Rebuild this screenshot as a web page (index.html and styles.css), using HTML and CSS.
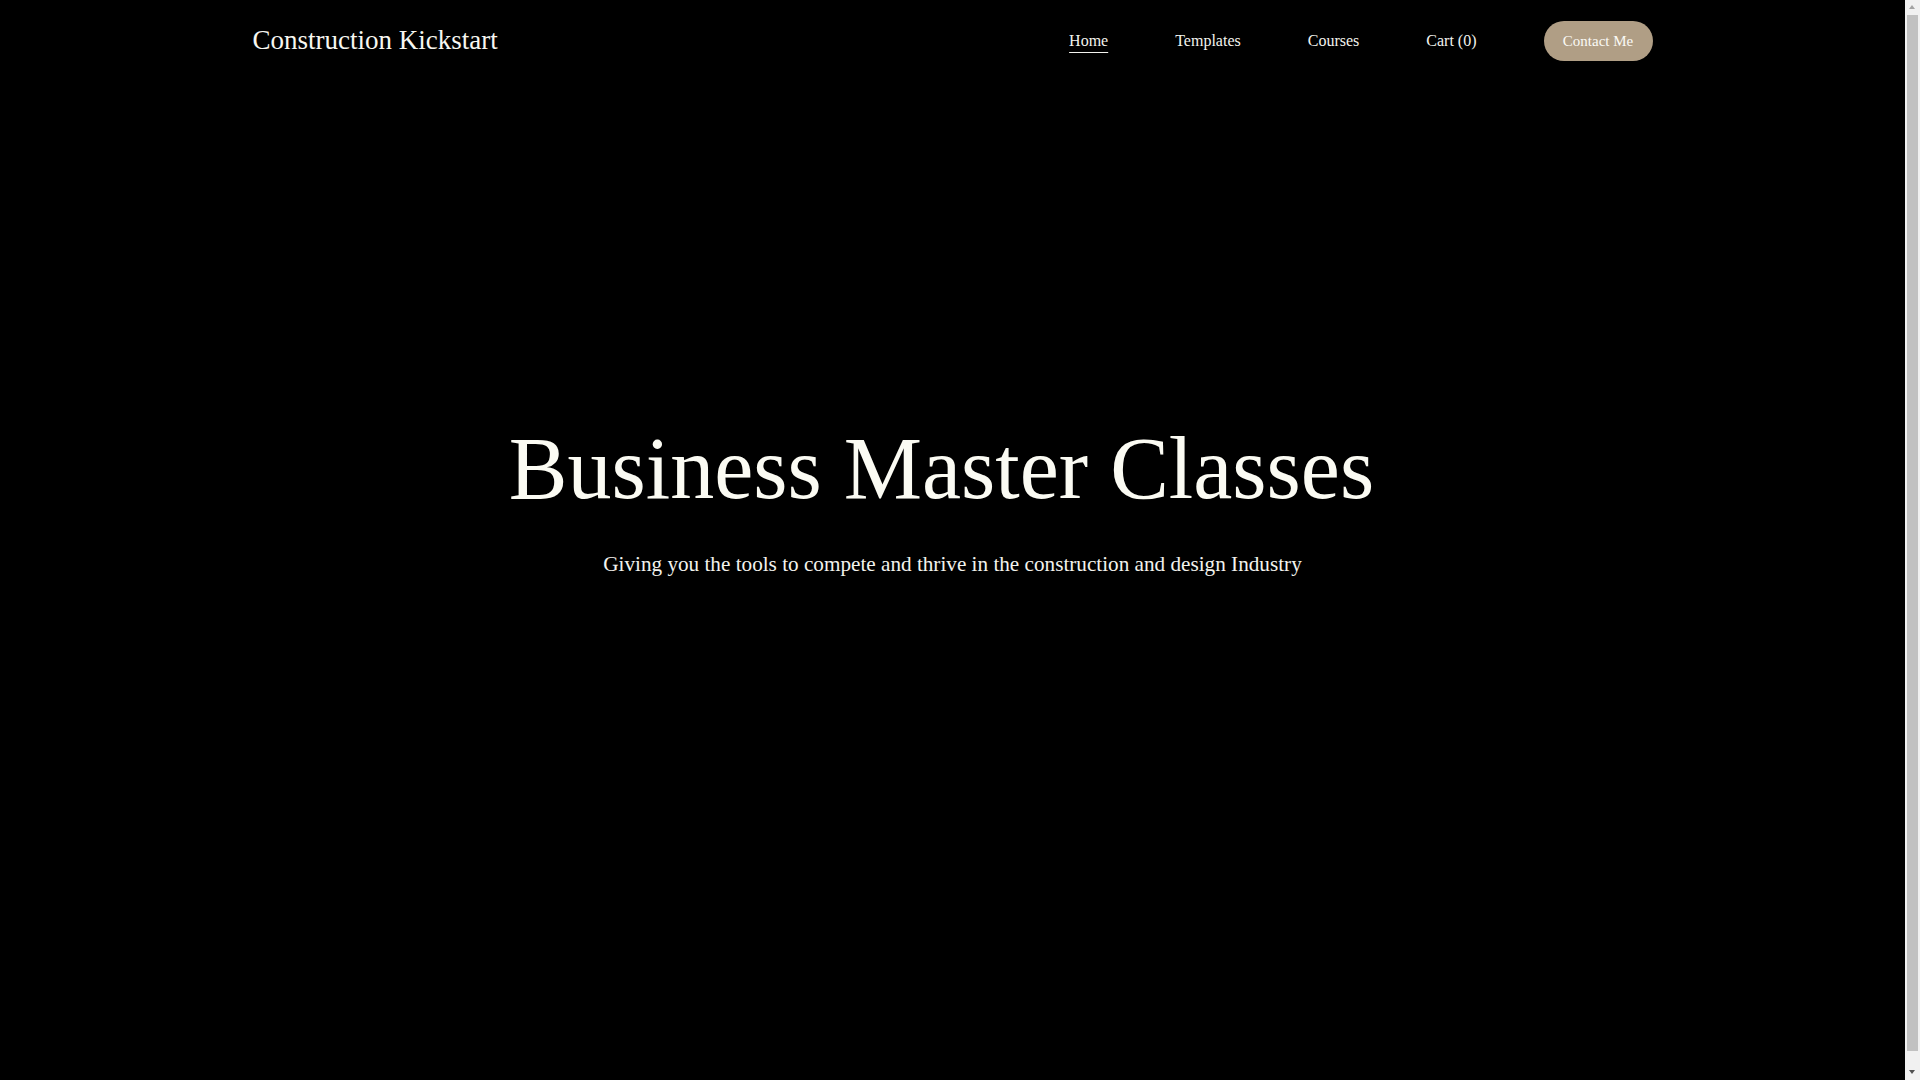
FILE: index.html
```html
<!DOCTYPE html>
<html lang="en">
<head>
<meta charset="utf-8">
<title>Construction Kickstart</title>
<link rel="stylesheet" href="styles.css">
</head>
<body>
<header class="site-header">
  <div class="header-inner">
    <a class="logo" href="#">Construction Kickstart</a>
    <nav class="main-nav">
      <a class="nav-link active" href="#">Home</a>
      <a class="nav-link" href="#">Templates</a>
      <a class="nav-link" href="#">Courses</a>
      <a class="nav-link" href="#">Cart (0)</a>
      <a class="btn-contact" href="#">Contact Me</a>
    </nav>
  </div>
</header>
<main class="hero">
  <h1 class="hero-title">Business Master Classes&nbsp;</h1>
  <p class="hero-sub">Giving you the tools to compete and thrive in the construction and design Industry</p>
</main>
<div class="scrollbar" aria-hidden="true">
  <span class="sb-arrow sb-up"></span>
  <span class="sb-thumb"></span>
  <span class="sb-arrow sb-down"></span>
</div>
</body>
</html>
```
FILE: styles.css
```css
html, body {
  margin: 0;
  padding: 0;
  background: #000;
}
body {
  font-family: "Liberation Serif", "Times New Roman", serif;
  color: #fafaf2;
  margin-right: 15px;
}
a {
  color: inherit;
  text-decoration: none;
}
.site-header {
  padding: 21px 0;
}
.header-inner {
  width: 1400px;
  margin: 0 auto;
  display: flex;
  align-items: center;
  justify-content: space-between;
  height: 40px;
}
.logo {
  font-size: 27px;
  line-height: 33px;
  margin-bottom: 2px;
  color: #f7f7f1;
}
.main-nav {
  display: flex;
  align-items: center;
  gap: 67px;
}
.nav-link {
  font-size: 16px;
  line-height: 24px;
  color: #f3f3ee;
}
.nav-link.active {
  text-decoration: underline;
  text-decoration-thickness: 1px;
  text-underline-offset: 6px;
}
.btn-contact {
  display: inline-flex;
  align-items: center;
  height: 40px;
  box-sizing: border-box;
  padding: 0 19.3px;
  border-radius: 20px;
  background: #b09e85;
  color: #fbfaf6;
  font-size: 15px;
  line-height: 15px;
}
.hero {
  height: 1012px;
  box-sizing: border-box;
  padding-top: 334px;
  text-align: center;
}
.hero-title {
  margin: 0;
  font-weight: normal;
  font-size: 88px;
  line-height: 105.6px;
  color: #fbfbf3;
}
.hero-sub {
  margin: 26px 0 0;
  font-size: 21.2px;
  line-height: 32px;
  color: #f3f3ee;
}

/* browser-style scrollbar overlay */
.scrollbar {
  position: fixed;
  top: 0;
  right: 0;
  width: 15px;
  height: 100vh;
  background: #f1f1f1;
}
.sb-thumb {
  position: absolute;
  left: 2px;
  top: 15px;
  width: 11px;
  height: 1036px;
  background: #c1c1c1;
}
.sb-arrow {
  position: absolute;
  left: 4px;
  width: 0;
  height: 0;
  border-left: 3.5px solid transparent;
  border-right: 3.5px solid transparent;
}
.sb-up {
  top: 5px;
  border-bottom: 4px solid #a3a3a3;
}
.sb-down {
  bottom: 6px;
  border-top: 4px solid #505050;
}
```
